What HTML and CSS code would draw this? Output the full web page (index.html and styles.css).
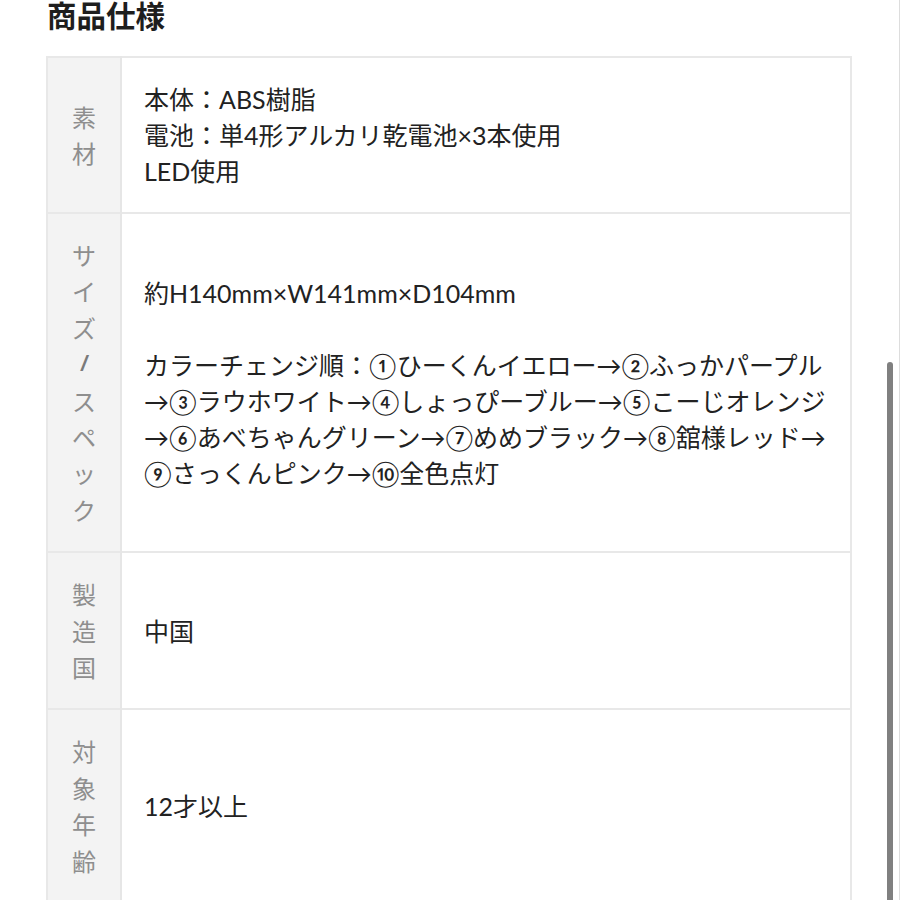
FILE: index.html
```html
<!DOCTYPE html>
<html lang="ja">
<head>
  <meta charset="UTF-8">
  <meta name="viewport" content="width=device-width, initial-scale=1.0">
  <title>商品仕様</title>
  <link rel="stylesheet" href="styles.css">
</head>
<body>
  <div class="container">
    <h2>商品仕様</h2>
    <table class="spec">
      <tr>
        <th><span>素材</span></th>
        <td>本体：ABS樹脂<br>電池：単4形アルカリ乾電池×3本使用<br>LED使用</td>
      </tr>
      <tr>
        <th><span>サイズ<b>/</b>スペック</span></th>
        <td>約H140mm×W141mm×D104mm<br><br>カラーチェンジ順：①ひーくんイエロー→②ふっかパープル<br>→③ラウホワイト→④しょっぴーブルー→⑤こーじオレンジ<br>→⑥あべちゃんグリーン→⑦めめブラック→⑧舘様レッド→<br>⑨さっくんピンク→⑩全色点灯</td>
      </tr>
      <tr>
        <th><span>製造国</span></th>
        <td>中国</td>
      </tr>
      <tr>
        <th><span>対象年齢</span></th>
        <td>12才以上</td>
      </tr>
    </table>
  </div>
  <div class="scrollbar"></div>
</body>
</html>
```

FILE: styles.css
```css
* {
  margin: 0;
  padding: 0;
  box-sizing: border-box;
}
html, body {
  overflow: hidden;
  height: 100%;
}
body {
  background-color: #fff;
  color: #222;
  font-family: "Noto Sans CJK JP", "Noto Sans", sans-serif;
}
.container {
  width: 852px;
  padding-left: 46px;
}
h2 {
  font-size: 29.5px;
  line-height: 30px;
  font-weight: 700;
  color: #1e1e1e;
  padding-left: 1px;
  margin-top: -1px;
  margin-bottom: 27px;
}
.spec {
  width: 100%;
  border-collapse: collapse;
  border: 2px solid #e8e8e8;
}
.spec tr {
  border-top: 2px solid #e8e8e8;
}
.spec th {
  width: 74px;
  background-color: #f3f3f3;
  border-right: 2px solid #e6e6e6;
  color: #8e8e8e;
  font-weight: 400;
  font-size: 24px;
  line-height: 36.4px;
  padding: 23px 0;
  text-align: center;
  vertical-align: middle;
}
.spec th span {
  display: inline-block;
  width: 1em;
  word-break: break-all;
}
.spec th b {
  display: block;
  font-family: "Liberation Sans", sans-serif;
  font-weight: 700;
  font-style: italic;
  font-size: 22px;
  color: #7a7a7a;
}
.spec td {
  font-family: "Lato", "Noto Sans CJK JP", sans-serif;
  font-size: 25px;
  line-height: 36px;
  padding: 23px 10px 23px 22px;
  vertical-align: middle;
  white-space: nowrap;
}
.scrollbar {
  position: fixed;
  top: 362px;
  right: 7px;
  bottom: 0;
  width: 6px;
  background-color: #808080;
  border-radius: 3px 3px 0 0;
}
body::after {
  content: "";
  position: fixed;
  top: 0;
  right: 0;
  bottom: 0;
  width: 1px;
  background-color: #ddd;
}
```
